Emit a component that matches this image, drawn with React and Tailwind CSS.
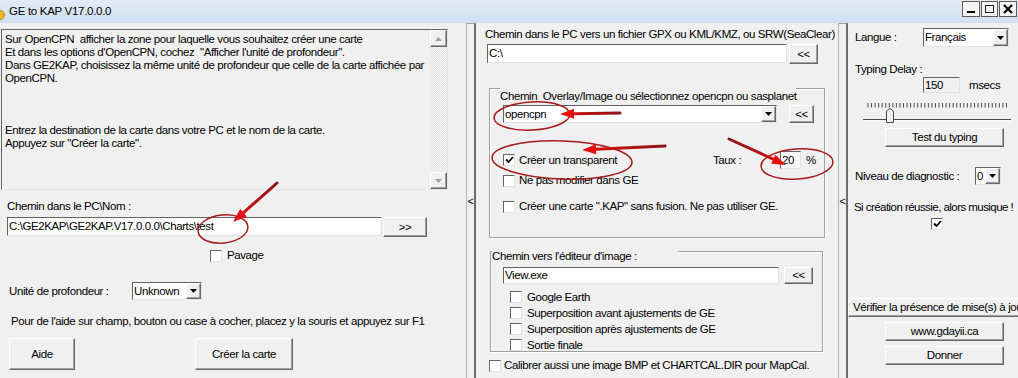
import React from "react";

const raised =
  "border border-t-white border-l-white border-r-[#696969] border-b-[#696969] shadow-[inset_-1px_-1px_0_#a0a0a0]";
const sunken =
  "border border-t-[#646464] border-l-[#646464] border-r-[#e3e3e3] border-b-[#e3e3e3]";

function Btn({ className = "", children }) {
  return (
    <div className={`flex items-center justify-center bg-[#f0f0f0] ${raised} ${className}`}>
      {children}
    </div>
  );
}

function Field({ className = "", children }) {
  return (
    <div className={`flex items-center bg-white pl-[1px] overflow-hidden ${sunken} ${className}`}>
      {children}
    </div>
  );
}

function Combo({ className = "", value }) {
  return (
    <div className={`flex items-stretch bg-white ${sunken} ${className}`}>
      <span className="flex-1 flex items-center pl-[1px] overflow-hidden">{value}</span>
      <div className={`w-[15px] flex items-center justify-center bg-[#f0f0f0] ${raised}`}>
        <svg width="7" height="4" viewBox="0 0 7 4">
          <path d="M0 0h7L3.5 4z" fill="#000" />
        </svg>
      </div>
    </div>
  );
}

function Check({ checked = false, className = "" }) {
  return (
    <div
      className={`w-[12px] h-[12px] shrink-0 bg-white flex items-center justify-center ${sunken} ${className}`}
    >
      {checked && (
        <svg width="9" height="8" viewBox="0 0 9 8">
          <path d="M1 3.5l2.5 2.5L8 1" stroke="#000" strokeWidth="1.8" fill="none" />
        </svg>
      )}
    </div>
  );
}

function CheckRow({ checked, label, className = "", box = "", gap = "ml-[4px]" }) {
  return (
    <div className={`flex items-center whitespace-nowrap ${className}`}>
      <Check checked={checked} className={box} />
      <span className={gap}>{label}</span>
    </div>
  );
}

function Splitter() {
  return (
    <div className="w-[10px] shrink-0 flex items-center justify-center border-t border-t-[#a0a0a0] border-l border-l-[#b4b4b4] border-r-2 border-r-[#6e6e6e] text-[11px]">
      &lt;
    </div>
  );
}

function ScrollArrow({ up }) {
  return (
    <div className={`h-[17px] flex items-center justify-center bg-[#f0f0f0] ${raised}`}>
      <svg width="7" height="4" viewBox="0 0 7 4">
        <path d={up ? "M0 4h7L3.5 0z" : "M0 0h7L3.5 4z"} fill="#a0a0a0" />
      </svg>
    </div>
  );
}

function RedArrow({ x1, y1, x2, y2, id }) {
  const dx = x2 - x1;
  const dy = y2 - y1;
  const len = Math.hypot(dx, dy);
  const ux = dx / len;
  const uy = dy / len;
  const hl = 14;
  const hw = 5;
  const bx = x2 - ux * hl;
  const by = y2 - uy * hl;
  const pts = `${x2},${y2} ${bx - uy * hw},${by + ux * hw} ${bx + uy * hw},${by - ux * hw}`;
  return (
    <g>
      <defs>
        <linearGradient id={id} gradientUnits="userSpaceOnUse" x1={x1} y1={y1} x2={x2} y2={y2}>
          <stop offset="0" stopColor="#8a1414" />
          <stop offset="1" stopColor="#e51212" />
        </linearGradient>
      </defs>
      <line x1={x1} y1={y1} x2={bx} y2={by} stroke={`url(#${id})`} strokeWidth="3" strokeLinecap="round" />
      <polygon points={pts} fill="#e41010" />
    </g>
  );
}

const ticks = Array.from({ length: 40 }, (_, i) => 20 + i * 3.55);

export default function App() {
  return (
    <div className="relative w-[1018px] h-[378px] overflow-hidden bg-[#f0f0f0] text-black font-['Liberation_Sans',Arial,sans-serif] text-[11.5px] tracking-[-0.4px] leading-[13px]">
      {/* title bar */}
      <div className="h-[23px] flex items-center bg-gradient-to-b from-[#e2ebf6] to-[#d1dfef]">
        <svg width="5" height="10" viewBox="0 0 5 10" className="mt-[6px]">
          <circle cx="0" cy="5" r="4.5" fill="#f1b52a" stroke="#b07a10" strokeWidth="0.8" />
        </svg>
        <span className="ml-[4px] text-[11.5px] tracking-[-0.3px]">GE to KAP V17.0.0.0</span>
        <div className="ml-auto self-start mt-[1px] mr-[1px] flex gap-[1px]">
          <div className="w-[18px] h-[16px] bg-[#f4f4f4] border border-[#5a5a5a] flex items-end justify-center pb-[3px]">
            <div className="w-[8px] h-[2px] bg-black" />
          </div>
          <div className="w-[17px] h-[16px] bg-[#f4f4f4] border border-[#5a5a5a] flex items-center justify-center">
            <div className="w-[9px] h-[8px] border border-[#222]" />
          </div>
          <div className="w-[18px] h-[16px] bg-[#f4f4f4] border border-[#5a5a5a] flex items-center justify-center">
            <svg width="10" height="10" viewBox="0 0 10 10">
              <path d="M1 1L9 9M9 1L1 9" stroke="#000" strokeWidth="2.2" />
            </svg>
          </div>
        </div>
      </div>

      <div className="flex h-[355px]">
        {/* left panel */}
        <div className="w-[466px] shrink-0 flex flex-col">
          <div className={`mt-[6px] ml-[1px] w-[447px] h-[161px] flex bg-[#f0f0f0] ${sunken}`}>
            <div className="flex-1 pl-[3px] pt-[3px] whitespace-pre">
              <div>Sur OpenCPN  afficher la zone pour laquelle vous souhaitez créer une carte</div>
              <div>Et dans les options d'OpenCPN, cochez  "Afficher l'unité de profondeur".</div>
              <div>Dans GE2KAP, choisissez la même unité de profondeur que celle de la carte affichée par</div>
              <div>OpenCPN.</div>
              <div>&nbsp;</div>
              <div>&nbsp;</div>
              <div>&nbsp;</div>
              <div>Entrez la destination de la carte dans votre PC et le nom de la carte.</div>
              <div>Appuyez sur "Créer la carte".</div>
            </div>
            <div className="w-[17px] flex flex-col">
              <ScrollArrow up />
              <div className="flex-1 bg-[repeating-conic-gradient(#f7f7f7_0_25%,#e2e2e2_0_50%)] bg-[length:2px_2px]" />
              <ScrollArrow />
            </div>
          </div>

          <div className="mt-[10px] ml-[7px] h-[13px] whitespace-nowrap">Chemin dans le PC\Nom :</div>
          <div className="mt-[4px] flex items-start">
            <Field className="ml-[7px] w-[375px] h-[19px]">C:\GE2KAP\GE2KAP.V17.0.0.0\Charts\test</Field>
            <Btn className="ml-[1px] w-[44px] h-[20px]">&gt;&gt;</Btn>
          </div>

          <CheckRow className="mt-[12px] h-[13px]" box="ml-[210px]" gap="ml-[5px]" label="Pavage" />

          <div className="mt-[20px] flex items-center h-[18px]">
            <span className="ml-[9px] w-[123px] whitespace-nowrap">Unité de profondeur :</span>
            <Combo className="w-[70px] h-[18px]" value="Unknown" />
          </div>

          <div className="mt-[15px] ml-[11px] h-[13px] whitespace-nowrap">
            Pour de l'aide sur champ, bouton ou case à cocher, placez y la souris et appuyez sur F1
          </div>

          <div className="mt-[10px] flex">
            <Btn className="ml-[9px] w-[66px] h-[32px]">Aide</Btn>
            <Btn className="ml-[120px] w-[98px] h-[32px]">Créer la carte</Btn>
          </div>
        </div>

        <Splitter />

        {/* middle panel */}
        <div className="w-[362px] shrink-0 flex flex-col">
          <div className="mt-[5px] ml-[9px] h-[13px] whitespace-nowrap">
            Chemin dans le PC vers un fichier GPX ou KML/KMZ, ou SRW(SeaClear)
          </div>
          <div className="mt-[3px] flex items-start">
            <Field className="ml-[11px] w-[300px] h-[19px]">C:\</Field>
            <Btn className="ml-[2px] w-[29px] h-[20px]">&lt;&lt;</Btn>
          </div>

          <div className="relative mt-[24px] ml-[13px] w-[336px] h-[150px] border border-[#a0a0a0] shadow-[inset_1px_1px_0_#fff,1px_1px_0_#fff]">
            <div className="absolute left-[10px] top-[-2px] h-[16px] pt-[3px] bg-[#f0f0f0] whitespace-pre">
              Chemin  Overlay/Image ou sélectionnez opencpn ou sasplanet
            </div>
            <div className="mt-[16px] flex items-center">
              <Combo className="ml-[13px] w-[274px] h-[18px]" value="opencpn" />
              <Btn className="ml-[12px] w-[25px] h-[18px]">&lt;&lt;</Btn>
            </div>
            <div className="mt-[28px] flex items-center h-[18px] whitespace-nowrap">
              <Check checked className="ml-[13px]" />
              <span className="ml-[4px] w-[194px]">Créer un transparent</span>
              <span className="w-[67px]">Taux :</span>
              <Field className="w-[21px] h-[18px]">20</Field>
              <span className="ml-[5px]">%</span>
            </div>
            <CheckRow className="mt-[5px] h-[13px]" box="ml-[13px]" label="Ne pas modifier dans GE" />
            <CheckRow
              className="mt-[13px] h-[13px]"
              box="ml-[13px]"
              label={'Créer une carte ".KAP" sans fusion. Ne pas utiliser GE.'}
            />
          </div>

          <div className="relative mt-[13px] ml-[14px] w-[333px] h-[101px] border border-[#a0a0a0] shadow-[inset_1px_1px_0_#fff,1px_1px_0_#fff]">
            <div className="absolute left-[1px] top-[-3px] w-[186px] h-[14px] pt-[1px] bg-[#f0f0f0] whitespace-nowrap">
              Chemin vers l'éditeur d'image :
            </div>
            <div className="mt-[15px] flex items-center">
              <Field className="ml-[12px] w-[276px] h-[17px]">View.exe</Field>
              <Btn className="ml-[5px] w-[29px] h-[17px]">&lt;&lt;</Btn>
            </div>
            <div className="mt-[5px] flex flex-col">
              <CheckRow className="h-[16px]" box="ml-[19px]" gap="ml-[5px]" label="Google Earth" />
              <CheckRow className="h-[16px]" box="ml-[19px]" gap="ml-[5px]" label="Superposition avant ajustements de GE" />
              <CheckRow className="h-[16px]" box="ml-[19px]" gap="ml-[5px]" label="Superposition après ajustements de GE" />
              <CheckRow className="h-[16px]" box="ml-[19px]" gap="ml-[5px]" label="Sortie finale" />
            </div>
          </div>

          <CheckRow
            className="mt-[7px] h-[13px]"
            box="ml-[13px]"
            gap="ml-[3px]"
            label="Calibrer aussi une image BMP et CHARTCAL.DIR pour MapCal."
          />
        </div>

        <Splitter />

        {/* right panel */}
        <div className="flex-1 min-w-0 flex flex-col">
          <div className="mt-[5px] flex items-center h-[19px]">
            <span className="ml-[7px] w-[68px] whitespace-nowrap">Langue :</span>
            <Combo className="w-[86px] h-[19px]" value="Français" />
          </div>
          <div className="mt-[16px] ml-[7px] h-[13px] whitespace-nowrap">Typing Delay :</div>
          <div className="mt-[1px] flex items-center h-[16px]">
            <Field className="ml-[75px] w-[37px] h-[16px] !bg-[#f0f0f0]">150</Field>
            <span className="ml-[9px]">msecs</span>
          </div>
          <svg width="170" height="25" viewBox="0 0 170 25" className="mt-[7px]">
            {ticks.map((x) => (
              <line key={x} x1={x} y1="3" x2={x} y2="7.5" stroke="#3a3a3a" strokeWidth="0.9" />
            ))}
            <line x1="15" y1="19.5" x2="163" y2="19.5" stroke="#4a4a4a" strokeWidth="1.2" />
            <line x1="15" y1="21" x2="163" y2="21" stroke="#ffffff" strokeWidth="1" />
            <path d="M38.5 11 L42 8.5 L45.5 11 L45.5 22.5 L38.5 22.5 Z" fill="#f0f0f0" stroke="#4a4a4a" strokeWidth="1" />
          </svg>
          <Btn className="mt-[3px] ml-[37px] w-[119px] h-[19px]">Test du typing</Btn>
          <div className="mt-[20px] flex items-center h-[18px]">
            <span className="ml-[7px] w-[120px] whitespace-nowrap">Niveau de diagnostic :</span>
            <Combo className="w-[26px] h-[18px]" value="0" />
          </div>
          <div className="mt-[16px] ml-[6px] h-[13px] whitespace-nowrap tracking-[-0.55px]">
            Si création réussie, alors musique !
          </div>
          <Check checked className="mt-[4px] ml-[83px]" />
          <Btn className="mt-[68px] w-[180px] h-[19px] !justify-start pl-[4px] whitespace-nowrap overflow-hidden">
            Vérifier la présence de mise(s) à jour
          </Btn>
          <Btn className="mt-[5px] ml-[37px] w-[119px] h-[19px]">www.gdayii.ca</Btn>
          <Btn className="mt-[5px] ml-[37px] w-[119px] h-[19px]">Donner</Btn>
        </div>
      </div>

      {/* red annotations drawn over the screenshot */}
      <svg className="absolute inset-0 pointer-events-none" width="1018" height="378" viewBox="0 0 1018 378">
        <g fill="none" stroke="#a51a1a" strokeWidth="1.5">
          <ellipse cx="223" cy="229" rx="25" ry="14" transform="rotate(-6 223 229)" />
          <ellipse cx="532" cy="116" rx="38" ry="14" transform="rotate(-3 532 116)" />
          <ellipse cx="562" cy="160" rx="70" ry="19" transform="rotate(2 562 160)" />
          <ellipse cx="797" cy="164" rx="36" ry="15" transform="rotate(-4 797 164)" />
        </g>
        <RedArrow id="a1" x1={277} y1={183} x2={233} y2={222} />
        <RedArrow id="a2" x1={620} y1={113} x2={560} y2={114} />
        <RedArrow id="a3" x1={665} y1={146} x2={582} y2={150} />
        <RedArrow id="a4" x1={729} y1={139} x2={786} y2={165} />
      </svg>
    </div>
  );
}
